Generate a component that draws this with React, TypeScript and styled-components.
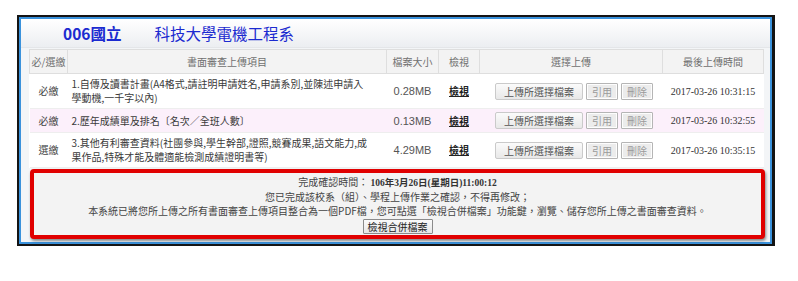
import React from "react";
import styled, { createGlobalStyle } from "styled-components";

const Global = createGlobalStyle`
  html, body { margin: 0; padding: 0; background: #fff; }
  body { font-family: "Noto Sans CJK TC", "Liberation Sans", sans-serif; }
`;

const Frame = styled.div`
  margin: 15px 0 0 17px;
  width: 758px;
  box-sizing: border-box;
  border: 2px solid #141414;
  border-right-width: 3px;
`;

const Inner = styled.div`
  border: 2px solid #3a92dc;
  background: #f3f5f7;
`;

const TitleBar = styled.div`
  height: 29px;
  display: flex;
  align-items: center;
  gap: 33px;
  padding-left: 42px;
  background: linear-gradient(#ffffff, #eceef1);
  border-bottom: 1px solid #e4e6e9;
  box-sizing: border-box;
`;

const TitlePart = styled.span<{ $bold?: boolean }>`
  font-size: 15.5px;
  line-height: 20px;
  color: #1b2ad0;
  font-weight: ${(p) => (p.$bold ? 700 : 400)};
`;

const Body = styled.div`
  padding: 1px 5px 3px 8px;
`;

const Table = styled.table`
  width: 734px;
  border-collapse: collapse;
  table-layout: fixed;
  background: #fff;
`;

const Th = styled.th<{ $w: number }>`
  width: ${(p) => p.$w}px;
  height: 24px;
  padding: 0;
  background: #f3f3f3;
  border: 1px solid #dedede;
  color: #707070;
  font-size: 10px;
  font-weight: 400;
  text-align: center;
  box-sizing: border-box;
`;

const Tr = styled.tr<{ $alt?: boolean }>`
  background: ${(p) => (p.$alt ? "#fcf0fb" : "#fff")};
  border-bottom: 1px solid #eeeeee;
`;

const Td = styled.td<{ $align?: string }>`
  padding: 3px 4px;
  font-size: 10px;
  line-height: 14px;
  color: #444;
  vertical-align: middle;
  text-align: ${(p) => p.$align || "center"};
  white-space: nowrap;
`;

const ItemText = styled.span`
  color: #3a3a3a;
`;

const Size = styled.span`
  font-family: "Liberation Sans", Arial, sans-serif;
  font-size: 11px;
  color: #555;
`;

const ViewLink = styled.a`
  font-size: 10px;
  font-weight: 700;
  color: #222;
  text-decoration: underline;
  cursor: pointer;
`;

const ButtonGroup = styled.div`
  display: flex;
  justify-content: center;
  align-items: center;
  gap: 3px;
  padding-left: 6px;
`;

const UploadButton = styled.button`
  height: 17px;
  padding: 0 8px;
  border: 1px solid #cacaca;
  border-radius: 2px;
  background: linear-gradient(#fbfbfb, #e8e8e8);
  color: #555;
  font-family: "Noto Sans CJK TC", sans-serif;
  font-size: 10px;
  line-height: 15px;
`;

const SmallButton = styled.button`
  height: 17px;
  padding: 0 5px;
  border: 1px solid #b5b5b5;
  border-radius: 1px;
  box-shadow: inset 0 0 0 1px #fdfdfd;
  background: #ececec;
  color: #9a9a9a;
  font-family: "Noto Sans CJK TC", sans-serif;
  font-size: 10px;
  line-height: 15px;
`;

const DateText = styled.span`
  font-family: "Liberation Serif", "Times New Roman", serif;
  font-size: 10px;
  color: #333;
`;

const Notice = styled.div`
  margin: 1px 0 0 1px;
  width: 735px;
  box-sizing: border-box;
  border: 4px solid #e00000;
  border-radius: 4px;
  box-shadow: 1px 2px 3px rgba(0, 0, 0, 0.45);
  background: #f3f3f3;
  padding: 2px 0 1px;
  display: flex;
  flex-direction: column;
  align-items: center;
  font-size: 10px;
  line-height: 14px;
  color: #444;
`;

const NoticeLine = styled.div`
  white-space: nowrap;
`;

const NoticeDate = styled.span`
  font-family: "Liberation Serif", "Noto Sans CJK TC", serif;
  font-weight: 700;
  font-size: 9.5px;
  color: #333;
`;

const MergeButton = styled.button`
  margin-top: 1px;
  height: 15px;
  padding: 0 4px;
  border: 1px solid #8a8a8a;
  border-radius: 1px;
  background: linear-gradient(#fafafa, #e6e6e6);
  color: #222;
  font-family: "Noto Sans CJK TC", sans-serif;
  font-size: 10px;
  line-height: 13px;
`;

const columns = [
  { label: "必/選繳", w: 38 },
  { label: "書面審查上傳項目", w: 319 },
  { label: "檔案大小", w: 52 },
  { label: "檢視", w: 41 },
  { label: "選擇上傳", w: 183 },
  { label: "最後上傳時間", w: 101 },
];

const rows = [
  {
    type: "必繳",
    lines: ["1.自傳及讀書計畫(A4格式,請註明申請姓名,申請系別,並陳述申請入", "學動機,一千字以內)"],
    size: "0.28MB",
    date: "2017-03-26 10:31:15",
  },
  {
    type: "必繳",
    lines: ["2.歷年成績單及排名〔名次／全班人數〕"],
    size: "0.13MB",
    date: "2017-03-26 10:32:55",
    alt: true,
  },
  {
    type: "選繳",
    lines: ["3.其他有利審查資料(社團參與,學生幹部,證照,競賽成果,語文能力,成", "果作品,特殊才能及體適能檢測成績證明書等)"],
    size: "4.29MB",
    date: "2017-03-26 10:35:15",
  },
];

export default function App() {
  return (
    <>
      <Global />
      <Frame>
        <Inner>
          <TitleBar>
            <TitlePart $bold>006國立</TitlePart>
            <TitlePart>科技大學電機工程系</TitlePart>
          </TitleBar>
          <Body>
            <Table>
              <thead>
                <tr>
                  {columns.map((c) => (
                    <Th key={c.label} $w={c.w}>
                      {c.label}
                    </Th>
                  ))}
                </tr>
              </thead>
              <tbody>
                {rows.map((r) => (
                  <Tr key={r.size} $alt={r.alt}>
                    <Td>{r.type}</Td>
                    <Td $align="left">
                      <ItemText>
                        {r.lines.map((l, i) => (
                          <React.Fragment key={i}>
                            {i > 0 && <br />}
                            {l}
                          </React.Fragment>
                        ))}
                      </ItemText>
                    </Td>
                    <Td>
                      <Size>{r.size}</Size>
                    </Td>
                    <Td>
                      <ViewLink>檢視</ViewLink>
                    </Td>
                    <Td>
                      <ButtonGroup>
                        <UploadButton>上傳所選擇檔案</UploadButton>
                        <SmallButton>引用</SmallButton>
                        <SmallButton>刪除</SmallButton>
                      </ButtonGroup>
                    </Td>
                    <Td>
                      <DateText>{r.date}</DateText>
                    </Td>
                  </Tr>
                ))}
              </tbody>
            </Table>
            <Notice>
              <NoticeLine>
                完成確認時間： <NoticeDate>106年3月26日(星期日)11:00:12</NoticeDate>
              </NoticeLine>
              <NoticeLine>您已完成該校系（組）、學程上傳作業之確認，不得再修改；</NoticeLine>
              <NoticeLine>
                本系統已將您所上傳之所有書面審查上傳項目整合為一個PDF檔，您可點選「檢視合併檔案」功能鍵，瀏覽、儲存您所上傳之書面審查資料。
              </NoticeLine>
              <MergeButton>檢視合併檔案</MergeButton>
            </Notice>
          </Body>
        </Inner>
      </Frame>
    </>
  );
}
